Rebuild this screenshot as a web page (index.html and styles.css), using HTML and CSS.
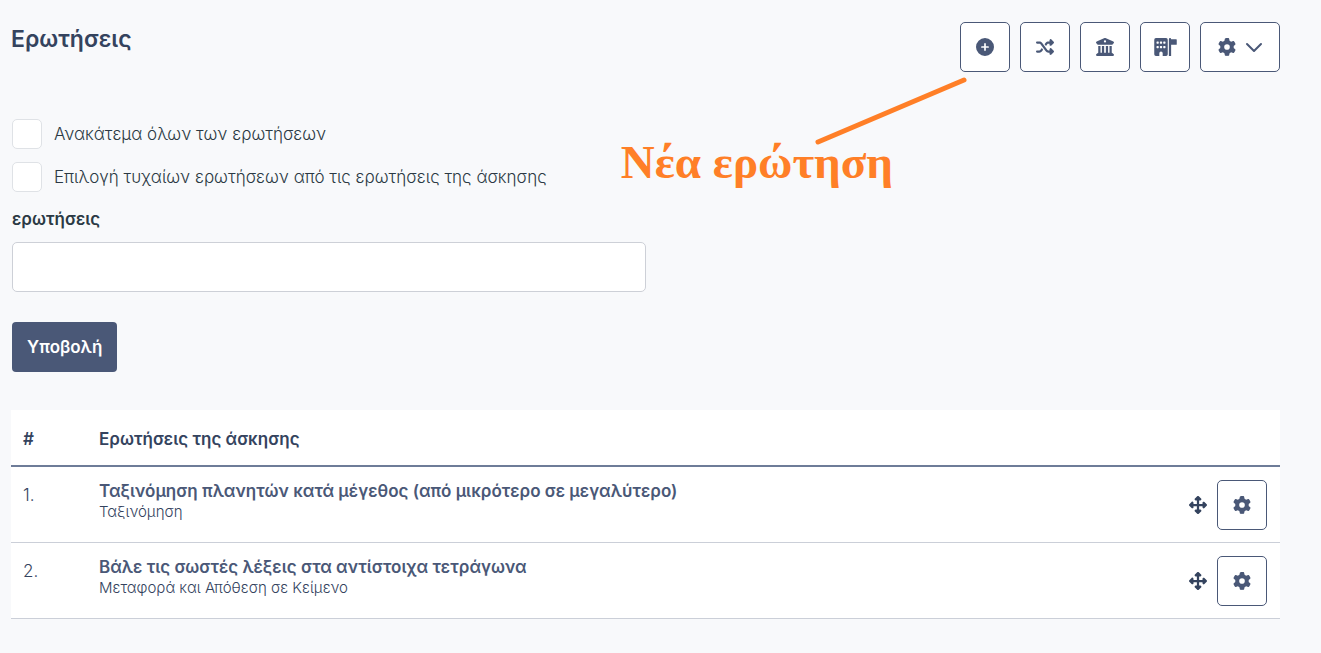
FILE: index.html
```html
<!DOCTYPE html>
<html lang="el">
<head>
    <meta charset="UTF-8">
    <meta name="viewport" content="width=device-width, initial-scale=1.0">
    <title>Ερωτήσεις</title>
    <link rel="stylesheet" href="styles.css">
</head>
<body>
    <!-- shared icons -->
    <svg class="icon-defs" aria-hidden="true">
        <symbol id="icon-gear" viewBox="0 0 512 512">
            <path d="M495.9 166.6c3.2 8.7 .5 18.4-6.4 24.6l-43.3 39.4c1.1 8.3 1.7 16.8 1.7 25.4s-.6 17.1-1.7 25.4l43.3 39.4c6.9 6.2 9.6 15.9 6.4 24.6c-4.4 11.9-9.7 23.3-15.8 34.3l-4.7 8.1c-6.6 11-14 21.4-22.1 31.2c-5.9 7.2-15.7 9.6-24.5 6.8l-55.7-17.7c-13.4 10.3-28.2 18.9-44 25.4l-12.5 57.1c-2 9.1-9 16.3-18.2 17.8c-13.8 2.3-28 3.5-42.5 3.5s-28.7-1.2-42.5-3.5c-9.2-1.5-16.2-8.7-18.2-17.8l-12.5-57.1c-15.8-6.5-30.6-15.1-44-25.4L83.1 425.9c-8.8 2.8-18.6 .3-24.5-6.8c-8.1-9.8-15.5-20.2-22.1-31.2l-4.7-8.1c-6.1-11-11.4-22.4-15.8-34.3c-3.2-8.7-.5-18.4 6.4-24.6l43.3-39.4C64.6 273.1 64 264.6 64 256s.6-17.1 1.7-25.4L22.4 191.2c-6.9-6.2-9.6-15.9-6.4-24.6c4.4-11.9 9.7-23.3 15.8-34.3l4.7-8.1c6.6-11 14-21.4 22.1-31.2c5.9-7.2 15.7-9.6 24.5-6.8l55.7 17.7c13.4-10.3 28.2-18.9 44-25.4l12.5-57.1c2-9.1 9-16.3 18.2-17.8C227.3 1.2 241.5 0 256 0s28.7 1.2 42.5 3.5c9.2 1.5 16.2 8.7 18.2 17.8l12.5 57.1c15.8 6.5 30.6 15.1 44 25.4l55.7-17.7c8.8-2.8 18.6-.3 24.5 6.8c8.1 9.8 15.5 20.2 22.1 31.2l4.7 8.1c6.1 11 11.4 22.4 15.8 34.3zM256 336a80 80 0 1 0 0-160 80 80 0 1 0 0 160z"/>
        </symbol>
        <symbol id="icon-move" viewBox="0 0 512 512">
            <path d="M278.6 9.4c-12.5-12.5-32.8-12.5-45.3 0l-64 64c-9.2 9.2-11.9 22.9-6.9 34.9s16.6 19.8 29.6 19.8h32v96H128V192c0-12.9-7.8-24.6-19.8-29.6s-25.7-2.2-34.9 6.9l-64 64c-12.5 12.5-12.5 32.8 0 45.3l64 64c9.2 9.2 22.9 11.9 34.9 6.9s19.8-16.6 19.8-29.6V288h96v96H192c-12.9 0-24.6 7.8-29.6 19.8s-2.2 25.7 6.9 34.9l64 64c12.5 12.5 32.8 12.5 45.3 0l64-64c9.2-9.2 11.9-22.9 6.9-34.9s-16.6-19.8-29.6-19.8H288V288h96v32c0 12.9 7.8 24.6 19.8 29.6s25.7 2.2 34.9-6.9l64-64c12.5-12.5 12.5-32.8 0-45.3l-64-64c-9.2-9.2-22.9-11.9-34.9-6.9s-19.8 16.6-19.8 29.6v32H288V128h32c12.9 0 24.6-7.8 29.6-19.8s2.2-25.7-6.9-34.9l-64-64z"/>
        </symbol>
    </svg>

    <div class="container">
        <div class="header">
            <h2>Ερωτήσεις</h2>
            <div class="toolbar">
                <button type="button" class="btn" aria-label="Νέα ερώτηση">
                    <svg class="icon" viewBox="0 0 512 512"><path fill-rule="evenodd" d="M256 0a256 256 0 1 0 0 512a256 256 0 1 0 0-512zM232 344V280H168a24 24 0 0 1 0-48h64V168a24 24 0 0 1 48 0v64h64a24 24 0 0 1 0 48H280v64a24 24 0 0 1-48 0z"/></svg>
                </button>
                <button type="button" class="btn" aria-label="Τυχαία επιλογή">
                    <svg class="icon" viewBox="0 0 512 512"><path d="M403.8 34.4c12-5 25.7-2.2 34.9 6.9l64 64c6 6 9.4 14.1 9.4 22.6s-3.4 16.6-9.4 22.6l-64 64c-9.2 9.2-22.9 11.9-34.9 6.9s-19.8-16.6-19.8-29.6V160H352c-10.1 0-19.6 4.7-25.6 12.8L284 229.3 244 176l31.2-41.6C293.3 110.2 321.8 96 352 96h32V64c0-12.9 7.8-24.6 19.8-29.6zM164 282.7L204 336l-31.2 41.6C154.7 401.8 126.2 416 96 416H32c-17.7 0-32-14.3-32-32s14.3-32 32-32H96c10.1 0 19.6-4.7 25.6-12.8L164 282.7zm274.6 188c-9.2 9.2-22.9 11.9-34.9 6.9s-19.8-16.6-19.8-29.6V416H352c-30.2 0-58.7-14.2-76.8-38.4L121.6 172.8c-6-8.1-15.5-12.8-25.6-12.8H32c-17.7 0-32-14.3-32-32s14.3-32 32-32H96c30.2 0 58.7 14.2 76.8 38.4L326.4 339.2c6 8.1 15.5 12.8 25.6 12.8h32V320c0-12.9 7.8-24.6 19.8-29.6s25.7-2.2 34.9 6.9l64 64c6 6 9.4 14.1 9.4 22.6s-3.4 16.6-9.4 22.6l-64 64z"/></svg>
                </button>
                <button type="button" class="btn" aria-label="Τράπεζα ερωτήσεων">
                    <svg class="icon" viewBox="0 0 512 512"><path d="M243.4 2.6l-224 96c-14 6-21.8 21-18.7 35.8S16.8 160 32 160v8c0 13.3 10.7 24 24 24H456c13.3 0 24-10.7 24-24v-8c15.2 0 28.3-10.7 31.3-25.6s-4.8-29.9-18.7-35.8l-224-96c-8-3.4-17.2-3.4-25.2 0zM128 224H64V420.3c-.6 .3-1.2 .7-1.8 1.1l-48 32c-11.7 7.8-17 22.4-12.9 35.9S17.9 512 32 512H480c14.1 0 26.5-9.2 30.6-22.7s-1.1-28.1-12.9-35.9l-48-32c-.6-.4-1.2-.7-1.8-1.1V224H384V416H344V224H280V416H232V224H168V416H128V224zM256 64a32 32 0 1 1 0 64 32 32 0 1 1 0-64z"/></svg>
                </button>
                <button type="button" class="btn" aria-label="Κατηγορίες">
                    <svg class="icon icon-wide" viewBox="0 0 640 512"><path fill-rule="evenodd" d="M48 0A48 48 0 0 0 0 48V464a48 48 0 0 0 48 48h96V432a48 48 0 0 1 96 0v80h96a48 48 0 0 0 48-48V48A48 48 0 0 0 336 0zM64 112q0-16 16-16h32q16 0 16 16v32q0 16-16 16H80q-16 0-16-16zM160 112q0-16 16-16h32q16 0 16 16v32q0 16-16 16h-32q-16 0-16-16zM256 112q0-16 16-16h32q16 0 16 16v32q0 16-16 16h-32q-16 0-16-16zM64 240q0-16 16-16h32q16 0 16 16v32q0 16-16 16H80q-16 0-16-16zM160 240q0-16 16-16h32q16 0 16 16v32q0 16-16 16h-32q-16 0-16-16zM256 240q0-16 16-16h32q16 0 16 16v32q0 16-16 16h-32q-16 0-16-16zM448 0a32 32 0 0 0-32 32V512h64V192H624q16 0 16-16V48q0-16-16-16H480A32 32 0 0 0 448 0z"/></svg>
                </button>
                <button type="button" class="btn btn-menu" aria-label="Ρυθμίσεις">
                    <svg class="icon"><use href="#icon-gear"/></svg>
                    <svg class="icon-chevron" viewBox="0 0 18 18"><path d="M2 6l7 7 7-7"/></svg>
                </button>
            </div>
        </div>

        <form class="options">
            <div class="check-row">
                <input type="checkbox" id="shuffle">
                <label for="shuffle">Ανακάτεμα όλων των ερωτήσεων</label>
            </div>
            <div class="check-row">
                <input type="checkbox" id="random">
                <label for="random">Επιλογή τυχαίων ερωτήσεων από τις ερωτήσεις της άσκησης</label>
            </div>
            <label class="field-label" for="count">ερωτήσεις</label>
            <input type="text" class="field" id="count">
            <button type="submit" class="submit">Υποβολή</button>
        </form>

        <table class="questions">
            <thead>
                <tr>
                    <th class="num">#</th>
                    <th colspan="2">Ερωτήσεις της άσκησης</th>
                </tr>
            </thead>
            <tbody>
                <tr>
                    <td class="num">1.</td>
                    <td>
                        <div class="title">Ταξινόμηση πλανητών κατά μέγεθος (από μικρότερο σε μεγαλύτερο)</div>
                        <div class="type">Ταξινόμηση</div>
                    </td>
                    <td class="options-cell">
                        <div class="actions">
                            <svg class="icon icon-move"><use href="#icon-move"/></svg>
                            <button type="button" class="btn" aria-label="Ρυθμίσεις ερώτησης 1"><svg class="icon"><use href="#icon-gear"/></svg></button>
                        </div>
                    </td>
                </tr>
                <tr>
                    <td class="num">2.</td>
                    <td>
                        <div class="title">Βάλε τις σωστές λέξεις στα αντίστοιχα τετράγωνα</div>
                        <div class="type">Μεταφορά και Απόθεση σε Κείμενο</div>
                    </td>
                    <td class="options-cell">
                        <div class="actions">
                            <svg class="icon icon-move"><use href="#icon-move"/></svg>
                            <button type="button" class="btn" aria-label="Ρυθμίσεις ερώτησης 2"><svg class="icon"><use href="#icon-gear"/></svg></button>
                        </div>
                    </td>
                </tr>
            </tbody>
        </table>

        <!-- callout pointing at the add button -->
        <div class="callout">
            <svg class="callout-line" viewBox="0 0 154 70"><path d="M4 66L150 4"/></svg>
            <span class="callout-text">Νέα ερώτηση</span>
        </div>
    </div>
</body>
</html>
```

FILE: styles.css
```css
* {
    margin: 0;
    padding: 0;
    box-sizing: border-box;
}
body {
    font-family: Inter, "Open Sans", sans-serif;
    font-size: 17px;
    line-height: 24px;
    color: #2b3944;
    background: #f8f9fb;
}
button, input {
    font: inherit;
}
.icon-defs {
    display: none;
}
.container {
    position: relative;
    padding: 22px 41px 34px 11px;
}
.header {
    display: flex;
    justify-content: space-between;
    align-items: flex-start;
    margin-bottom: 47px;
}
.header h2 {
    font-size: 23px;
    line-height: 34px;
    font-weight: 600;
    color: #34435e;
}
.toolbar {
    display: flex;
    gap: 10px;
}
.btn {
    display: flex;
    align-items: center;
    justify-content: center;
    width: 50px;
    height: 50px;
    background: white;
    border: 1px solid #4a5877;
    border-radius: 5px;
    color: #4a5877;
    cursor: pointer;
}
.btn:hover {
    background: #eef1f6;
}
.btn-menu {
    width: 80px;
    gap: 9px;
}
.icon {
    width: 18px;
    height: 18px;
    fill: currentColor;
}
.icon-wide {
    width: 23px;
}
.icon-chevron {
    width: 18px;
    height: 18px;
    fill: none;
    stroke: currentColor;
    stroke-width: 2;
    stroke-linecap: round;
    stroke-linejoin: round;
}
.options {
    padding: 0 1px;
    margin-bottom: 38px;
}
.check-row {
    display: flex;
    align-items: center;
    gap: 12px;
    margin-bottom: 13px;
    font-weight: 300;
}
.check-row input {
    appearance: none;
    width: 30px;
    height: 30px;
    background: white;
    border: 1px solid #dfe2e6;
    border-radius: 5px;
}
.check-row input:checked {
    background: #4a5877;
}
.field-label {
    display: block;
    margin: 15px 0 11px;
    font-weight: 600;
}
.field {
    display: block;
    width: 50%;
    height: 50px;
    padding: 0 15px;
    background: white;
    border: 1px solid #cdd0d7;
    border-radius: 5px;
}
.submit {
    height: 50px;
    margin-top: 30px;
    padding: 0 15px;
    background: #4a5877;
    color: white;
    border: none;
    border-radius: 4px;
    font-weight: 600;
    cursor: pointer;
}
.questions {
    width: 100%;
    border-collapse: separate;
    border-spacing: 0;
    background: white;
    color: #34435e;
}
.questions th {
    height: 57px;
    padding: 2px 12px 0;
    border-bottom: 2px solid #6e7c98;
    text-align: left;
    font-weight: 600;
}
.questions td {
    height: 76px;
    padding: 12px;
    border-bottom: 1px solid #cbcfd8;
    vertical-align: top;
}
.questions .num {
    width: 76px;
}
.questions td.num {
    padding-top: 16px;
    font-weight: 300;
}
.questions .options-cell {
    padding: 13px 13px 12px;
}
.title {
    color: #4a5877;
    font-weight: 600;
}
.type {
    font-size: 15px;
    line-height: 18px;
    font-weight: 300;
}
.actions {
    display: flex;
    align-items: center;
    justify-content: flex-end;
    gap: 10px;
}
.icon-move {
    color: #34435e;
}
.callout {
    position: absolute;
    top: 76px;
    right: 353px;
    display: flex;
    flex-direction: column;
    align-items: flex-end;
    color: #ff7f27;
    pointer-events: none;
}
.callout-line {
    width: 154px;
    height: 70px;
    fill: none;
    stroke: currentColor;
    stroke-width: 5;
    stroke-linecap: round;
}
.callout-text {
    margin: -10px 75px 0 0;
    font-family: "Liberation Serif", serif;
    font-size: 47px;
    line-height: 52px;
    font-weight: bold;
}
```
